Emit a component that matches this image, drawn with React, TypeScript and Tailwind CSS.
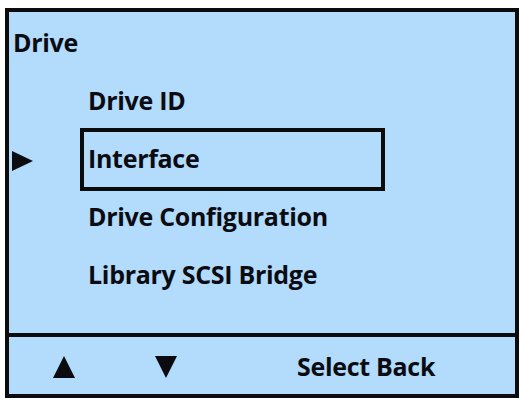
import React from "react";

const items = ["Drive ID", "Interface", "Drive Configuration", "Library SCSI Bridge"];
const selected = 1;

function Pointer() {
  return (
    <svg width="21" height="20" viewBox="0 0 21 20" className="block">
      <polygon points="0,0 21,10 0,20" fill="#0b0b10" />
    </svg>
  );
}

function Arrow({ up }: { up?: boolean }) {
  return (
    <svg width="22" height="22" viewBox="0 0 22 22" className="block">
      <polygon points={up ? "11,0 22,22 0,22" : "0,0 22,0 11,22"} fill="#0b0b10" />
    </svg>
  );
}

export default function App() {
  return (
    <div
      className="w-[520px] h-[398px] bg-white pt-[8px] pl-[5px] text-[#0b0b12]"
      style={{ fontFamily: '"Open Sans", "Noto Sans", sans-serif' }}
    >
      <div className="w-[514px] h-[390px] border-[4px] border-[#0b0b0b] bg-[#b2dbfc] flex flex-col">
        {/* Menu area */}
        <div className="h-[321px] pt-[2px]">
          <div className="h-[58px] flex items-center pl-[4px] text-[25px] font-bold tracking-[-0.3px]">Drive</div>

          {items.map((label, i) => (
            <div key={label} className="h-[58px] flex items-center">
              <div className="w-[71px] pl-[3px] pt-[3px]">{i === selected && <Pointer />}</div>
              <div
                className={
                  "flex items-center pl-[4px] text-[25px] font-bold tracking-[-0.3px] " +
                  (i === selected
                    ? "w-[305px] h-[63px] border-[4px] border-[#0b0b0b]"
                    : "border-[4px] border-transparent")
                }
              >
                {label}
              </div>
            </div>
          ))}
        </div>

        {/* Soft key bar */}
        <div className="flex-1 border-t-[4px] border-[#0b0b0b] flex items-center pl-[44px] pt-[2px]">
          <Arrow up />
          <div className="ml-[80px]">
            <Arrow />
          </div>
          <div className="ml-[120px] text-[25px] font-bold tracking-[-0.3px]">Select Back</div>
        </div>
      </div>
    </div>
  );
}
